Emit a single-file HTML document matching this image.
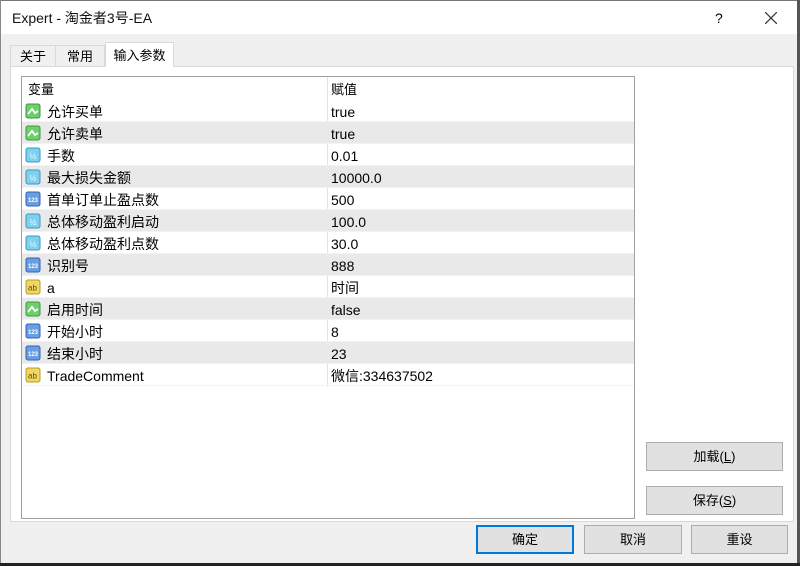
<!DOCTYPE html>
<html><head><meta charset="utf-8"><style>
*{margin:0;padding:0;box-sizing:border-box}
body{width:800px;height:566px;background:#f0f0f0;font-family:"Liberation Sans","Noto Sans CJK SC",sans-serif;font-size:13px;color:#000;position:relative;overflow:hidden}
.abs{position:absolute}
#title{left:0;top:0;width:800px;height:34px;background:#fff;border-top:1px solid #777}
#title .t{left:12px;top:0;line-height:34px;font-size:14px;color:#111}
#frameL{left:0;top:0;width:1px;height:566px;background:#888}
#frameR{left:797px;top:0;width:3px;height:566px;background:#555}
#frameB{left:0;top:563px;width:800px;height:3px;background:#222}
.tab{top:45px;height:22px;border:1px solid #d9d9d9;border-bottom:none;background:#f0f0f0;text-align:center;line-height:21px;font-size:13px}
#panel{left:10px;top:66px;width:784px;height:456px;background:#fff;border:1px solid #d9d9d9}
#tbl{left:21px;top:76px;width:614px;height:443px;border:1px solid #a0a0a0;background:#fff}
.row{position:absolute;left:0;width:612px;height:22px;border-bottom:1px solid #f3f3f3;font-size:14px}
.row.s{background:#e9e9e9}
.row .n{position:absolute;left:25px;top:1px;line-height:22px;height:22px;white-space:nowrap}
.row .v{position:absolute;left:309px;top:1px;line-height:22px;height:22px;white-space:nowrap}
.row .ic{position:absolute;left:3px;top:3px;width:16px;height:16px}
.div{left:327px;top:77px;width:1px;height:310px;background:#e3e3e3}
.btn{height:29px;background:#e1e1e1;border:1px solid #adadad;text-align:center;line-height:27px;font-size:13px}
</style></head><body>
<div class="abs" id="title"><div class="abs t">Expert - 淘金者3号-EA</div>
<div class="abs" style="left:715px;top:0;line-height:34px;font-size:14px">?</div>
<svg class="abs" style="left:765px;top:11px" width="12" height="12"><path d="M0 0L12 12M12 0L0 12" stroke="#333" stroke-width="1.2"/></svg>
</div>
<div class="abs tab" style="left:10px;width:46px">关于</div>
<div class="abs tab" style="left:55px;width:50px">常用</div>
<div class="abs" id="panel"></div>
<div class="abs tab" style="left:105px;top:42px;height:25px;width:69px;background:#fff;line-height:25px;z-index:2">输入参数</div>
<div class="abs" id="tbl">
<div class="row" style="top:0;height:23px;border:none;font-size:13px"><span class="n" style="left:6px;line-height:23px">变量</span><span class="v" style="line-height:23px">赋值</span></div>
</div>
<div class="abs div"></div>
<div class="abs" id="rows" style="left:22px;top:100px"></div>
<div class="abs btn" style="left:646px;top:442px;width:137px">加载(<u>L</u>)</div>
<div class="abs btn" style="left:646px;top:486px;width:137px">保存(<u>S</u>)</div>
<div class="abs btn" style="left:476px;top:525px;width:98px;border:1px solid #0078d7;box-shadow:inset 0 0 0 1px #0078d7">确定</div>
<div class="abs btn" style="left:584px;top:525px;width:98px">取消</div>
<div class="abs btn" style="left:691px;top:525px;width:97px">重设</div>
<div class="abs" id="frameL"></div><div class="abs" id="frameR"></div><div class="abs" id="frameB"></div>
<script>
var I={
b:'<svg class="ic" viewBox="0 0 16 16"><rect x="1" y="1" width="14" height="14" rx="2" fill="#6fcf6f" stroke="#3a9a3a"/><path d="M3 11L7 6L10 10L13 8" stroke="#fff" stroke-width="1.8" fill="none"/></svg>',
d:'<svg class="ic" viewBox="0 0 16 16"><rect x="1" y="1" width="14" height="14" rx="2" fill="#7fd0ee" stroke="#3a98c0"/><text x="8" y="12" font-size="8" text-anchor="middle" fill="#fff" font-family="Liberation Sans">½</text></svg>',
i:'<svg class="ic" viewBox="0 0 16 16"><rect x="1" y="1" width="14" height="14" rx="2" fill="#6a9ee0" stroke="#2f63b0"/><text x="8" y="11" font-size="6" font-weight="bold" text-anchor="middle" fill="#fff" font-family="Liberation Sans">123</text></svg>',
s:'<svg class="ic" viewBox="0 0 16 16"><rect x="1" y="1" width="14" height="14" rx="2" fill="#efd765" stroke="#b89c20"/><text x="7.5" y="11.5" font-size="8" text-anchor="middle" fill="#6a4a00" font-family="Liberation Sans">ab</text></svg>'};
var R=[['b','允许买单','true'],['b','允许卖单','true'],['d','手数','0.01'],['d','最大损失金额','10000.0'],['i','首单订单止盈点数','500'],['d','总体移动盈利启动','100.0'],['d','总体移动盈利点数','30.0'],['i','识别号','888'],['s','a','时间'],['b','启用时间','false'],['i','开始小时','8'],['i','结束小时','23'],['s','TradeComment','微信:334637502']];
var h='';R.forEach(function(r,k){h+='<div class="row'+(k%2?' s':'')+'" style="top:'+(k*22)+'px">'+I[r[0]]+'<span class="n">'+r[1]+'</span><span class="v">'+r[2]+'</span></div>'});
document.getElementById('rows').innerHTML=h;
</script>
</body></html>
